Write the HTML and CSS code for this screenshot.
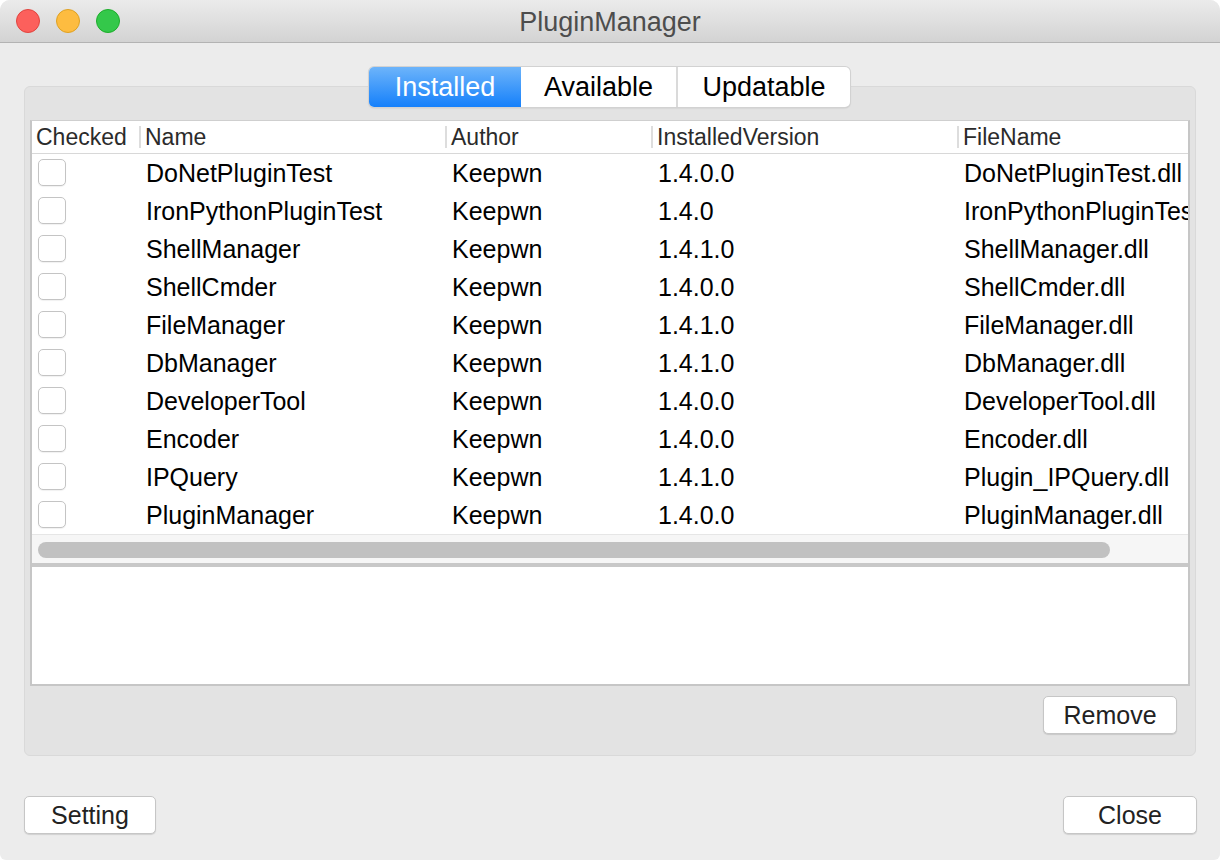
FILE: index.html
```html
<!DOCTYPE html>
<html>
<head>
<meta charset="utf-8">
<title>PluginManager</title>
<link rel="stylesheet" href="styles.css">
</head>
<body>
<div class="window">
  <div class="titlebar">
    <div class="lights">
      <span class="light red"></span>
      <span class="light yellow"></span>
      <span class="light green"></span>
    </div>
    <div class="title">PluginManager</div>
    <div></div>
  </div>
  <div class="content">
    <div class="tabs">
      <div class="tab tab-installed active">Installed</div>
      <div class="tab tab-available">Available</div>
      <div class="tab tab-updatable">Updatable</div>
    </div>
    <div class="pane">
      <div class="tablebox">
        <div class="grid header">
          <div class="cell first">Checked</div>
          <div class="cell sep">Name</div>
          <div class="cell sep">Author</div>
          <div class="cell sep">InstalledVersion</div>
          <div class="cell sep">FileName</div>
        </div>
        <div class="rows">
          <div class="grid row"><div class="cell first"><span class="check"></span></div><div class="cell">DoNetPluginTest</div><div class="cell">Keepwn</div><div class="cell">1.4.0.0</div><div class="cell">DoNetPluginTest.dll</div></div>
          <div class="grid row"><div class="cell first"><span class="check"></span></div><div class="cell">IronPythonPluginTest</div><div class="cell">Keepwn</div><div class="cell">1.4.0</div><div class="cell">IronPythonPluginTest.dll</div></div>
          <div class="grid row"><div class="cell first"><span class="check"></span></div><div class="cell">ShellManager</div><div class="cell">Keepwn</div><div class="cell">1.4.1.0</div><div class="cell">ShellManager.dll</div></div>
          <div class="grid row"><div class="cell first"><span class="check"></span></div><div class="cell">ShellCmder</div><div class="cell">Keepwn</div><div class="cell">1.4.0.0</div><div class="cell">ShellCmder.dll</div></div>
          <div class="grid row"><div class="cell first"><span class="check"></span></div><div class="cell">FileManager</div><div class="cell">Keepwn</div><div class="cell">1.4.1.0</div><div class="cell">FileManager.dll</div></div>
          <div class="grid row"><div class="cell first"><span class="check"></span></div><div class="cell">DbManager</div><div class="cell">Keepwn</div><div class="cell">1.4.1.0</div><div class="cell">DbManager.dll</div></div>
          <div class="grid row"><div class="cell first"><span class="check"></span></div><div class="cell">DeveloperTool</div><div class="cell">Keepwn</div><div class="cell">1.4.0.0</div><div class="cell">DeveloperTool.dll</div></div>
          <div class="grid row"><div class="cell first"><span class="check"></span></div><div class="cell">Encoder</div><div class="cell">Keepwn</div><div class="cell">1.4.0.0</div><div class="cell">Encoder.dll</div></div>
          <div class="grid row"><div class="cell first"><span class="check"></span></div><div class="cell">IPQuery</div><div class="cell">Keepwn</div><div class="cell">1.4.1.0</div><div class="cell">Plugin_IPQuery.dll</div></div>
          <div class="grid row"><div class="cell first"><span class="check"></span></div><div class="cell">PluginManager</div><div class="cell">Keepwn</div><div class="cell">1.4.0.0</div><div class="cell">PluginManager.dll</div></div>
        </div>
        <div class="hscroll"><div class="thumb"></div></div>
        <div class="splitter"></div>
        <div class="textbox"></div>
      </div>
      <div class="pane-actions">
        <button class="btn btn-remove">Remove</button>
      </div>
    </div>
    <div class="footer">
      <button class="btn btn-setting">Setting</button>
      <button class="btn btn-close">Close</button>
    </div>
  </div>
</div>
</body>
</html>
```
FILE: styles.css
```css
* { box-sizing: border-box; }

html, body {
  margin: 0;
  padding: 0;
  background: #ffffff;
}

body {
  font-family: "Liberation Sans", Arial, sans-serif;
  width: 1220px;
  height: 860px;
  overflow: hidden;
}

.window {
  width: 1220px;
  height: 860px;
  background: #ececec;
  border-radius: 10px 10px 6px 6px;
  overflow: hidden;
  display: flex;
  flex-direction: column;
}

.titlebar {
  height: 43px;
  flex: none;
  background: linear-gradient(#ebebeb, #d3d3d3);
  border-bottom: 1px solid #b3b3b3;
  display: grid;
  grid-template-columns: 1fr auto 1fr;
  align-items: center;
}

.lights {
  display: flex;
  gap: 16px;
  padding-left: 16px;
  padding-bottom: 1px;
}

.light {
  width: 24px;
  height: 24px;
  border-radius: 50%;
  display: block;
}
.red { background: #fc605c; border: 1px solid #e0443e; }
.yellow { background: #fdbc40; border: 1px solid #dea123; }
.green { background: #34c84a; border: 1px solid #1dad2b; }

.title {
  font-size: 27px;
  color: #4d4d4d;
  line-height: 1;
  padding-top: 2px;
}

.content {
  flex: 1;
  display: flex;
  flex-direction: column;
  padding: 24px 23px 0 24px;
}

.tabs {
  align-self: center;
  display: flex;
  height: 40px;
  margin-bottom: -21px;
  margin-left: -2px;
  position: relative;
  z-index: 1;
  background: #fff;
  border-radius: 5px;
  box-shadow: 0 0 0 1px #d2d2d2, 0 1px 2px rgba(0, 0, 0, 0.18);
}

.tab {
  display: flex;
  align-items: center;
  justify-content: center;
  font-size: 27px;
  color: #000;
}
.tab-installed { width: 152px; border-radius: 5px 0 0 5px; }
.tab-available { width: 155px; }
.tab-updatable { width: 174px; border-left: 2px solid #dadada; border-radius: 0 5px 5px 0; }

.tab.active {
  color: #fff;
  background: linear-gradient(#6db4fa, #1580fb);
}

.pane {
  width: 1172px;
  height: 670px;
  background: #e3e3e3;
  border: 1px solid #d9d9d9;
  border-radius: 6px;
  padding: 33px 5px 20px 5px;
  display: flex;
  flex-direction: column;
}

.tablebox {
  border: 2px solid #c6c6c6;
  border-top: 1px solid #cfcfcf;
  background: #fff;
  overflow: hidden;
  display: flex;
  flex-direction: column;
}

.grid {
  display: grid;
  grid-template-columns: 107px 306px 206px 306px 320px;
  width: 1245px;
}

.header {
  height: 33px;
  border-bottom: 1px solid #d8d8d8;
  font-size: 23px;
  color: #2b2b2b;
  align-items: center;
}

.cell {
  padding-left: 7px;
  white-space: nowrap;
  display: flex;
  align-items: center;
  height: 100%;
}

.header .first {
  padding-left: 4px;
}

.header .sep {
  padding-left: 4px;
  position: relative;
  border-left: 2px solid transparent;
}
.header .sep::before {
  content: "";
  position: absolute;
  left: -2px;
  top: 5px;
  bottom: 5px;
  width: 2px;
  background: #dddddd;
}

.row {
  height: 38px;
  font-size: 25px;
  color: #000;
}

.row .first {
  padding-left: 6px;
}

.check {
  width: 28px;
  height: 27px;
  border: 1px solid #c4c4c4;
  border-radius: 5px;
  background: #fff;
  box-shadow: 0 1px 1px rgba(0, 0, 0, 0.06);
  margin-top: -1px;
  display: block;
}

.hscroll {
  height: 29px;
  border-top: 1px solid #e6e6e6;
  background: #f6f6f6;
  padding: 7px 0 0 6px;
}

.thumb {
  width: 1072px;
  height: 16px;
  border-radius: 8px;
  background: #c1c1c1;
}

.splitter {
  height: 4px;
  background: #c8c8c8;
}

.textbox {
  height: 117px;
  background: #fff;
}

.pane-actions {
  display: flex;
  justify-content: flex-end;
  padding-top: 10px;
  padding-right: 13px;
}

.btn {
  font-family: "Liberation Sans", Arial, sans-serif;
  font-size: 25px;
  color: #222;
  background: #fff;
  border: 1px solid #c6c6c6;
  border-radius: 5px;
  box-shadow: 0 1px 1px rgba(0, 0, 0, 0.12);
  height: 38px;
  padding: 0;
  display: flex;
  align-items: center;
  justify-content: center;
}

.btn-remove { width: 134px; }

.footer {
  display: flex;
  justify-content: space-between;
  margin-top: 40px;
}

.btn-setting { width: 132px; }
.btn-close { width: 134px; }
```
